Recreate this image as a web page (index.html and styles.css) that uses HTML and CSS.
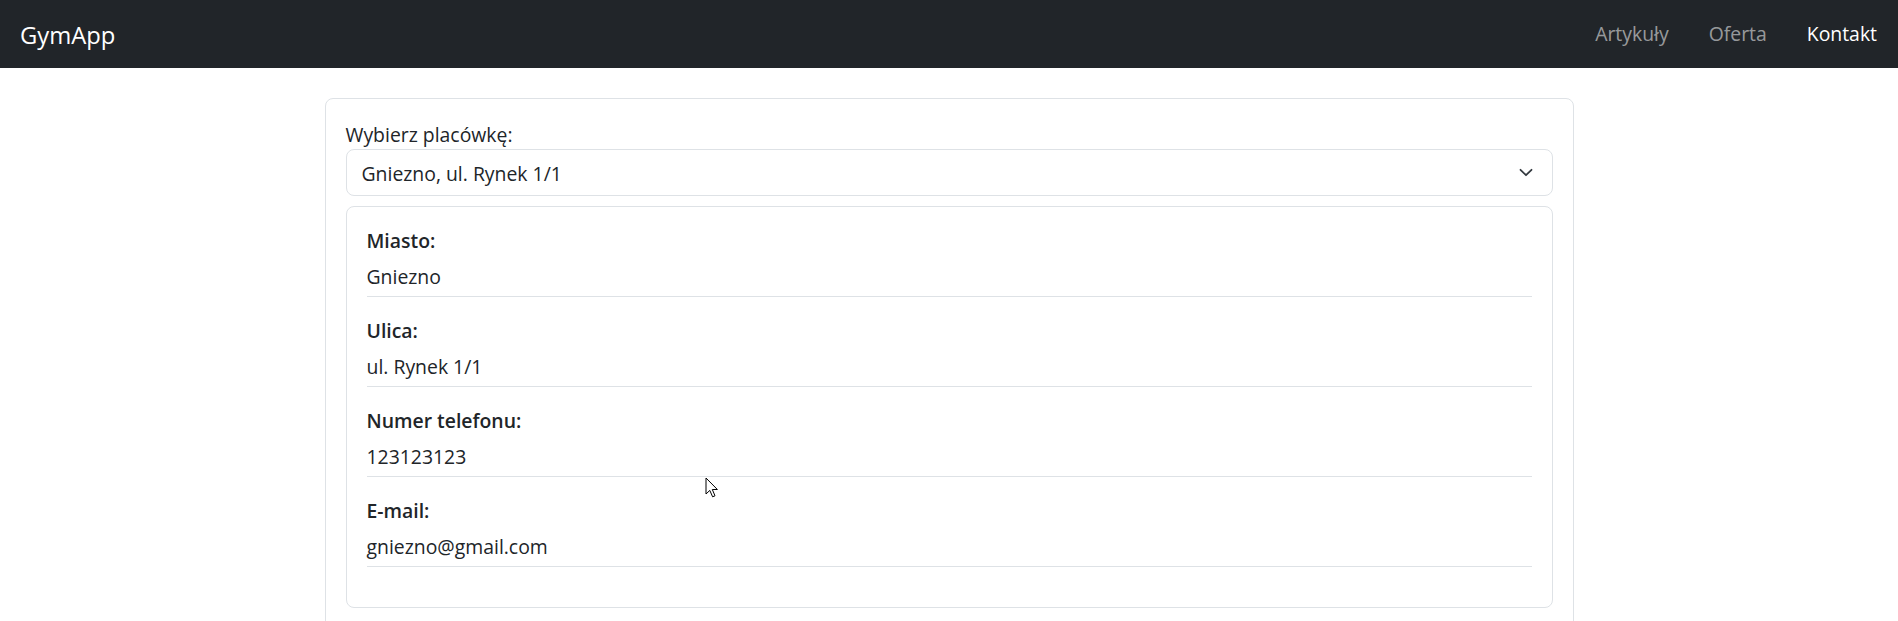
FILE: index.html
```html
<!DOCTYPE html>
<html lang="pl">
<head>
<meta charset="utf-8">
<title>GymApp</title>
<link rel="stylesheet" href="styles.css">
</head>
<body>
<nav class="navbar">
  <a class="brand" href="#">GymApp</a>
  <ul class="nav">
    <li><a class="nav-link" href="#">Artykuły</a></li>
    <li><a class="nav-link" href="#">Oferta</a></li>
    <li><a class="nav-link active" href="#">Kontakt</a></li>
  </ul>
</nav>
<main class="container">
  <div class="card">
    <label class="form-label">Wybierz placówkę:</label>
    <div class="select">
      <span class="select-text">Gniezno, ul. Rynek 1/1</span>
      <svg class="chev" width="14" height="9" viewBox="0 0 14 9"><path d="M1.5 1.8 7 7.2 12.5 1.8" fill="none" stroke="#343a40" stroke-width="1.8" stroke-linecap="round" stroke-linejoin="round"/></svg>
    </div>
    <div class="info">
      <div class="group">
        <div class="label">Miasto:</div>
        <div class="value">Gniezno</div>
      </div>
      <div class="group">
        <div class="label">Ulica:</div>
        <div class="value">ul. Rynek 1/1</div>
      </div>
      <div class="group">
        <div class="label">Numer telefonu:</div>
        <div class="value">123123123</div>
      </div>
      <div class="group">
        <div class="label">E-mail:</div>
        <div class="value">gniezno@gmail.com</div>
      </div>
    </div>
  </div>
</main>
<svg class="cursor" width="14" height="22" viewBox="0 0 14 22"><path d="M1 1 V17 L4.8 13.4 L7.6 19.8 L10 18.8 L7.3 12.5 H12.4 Z" fill="#fff" stroke="#000" stroke-width="1" stroke-linejoin="miter"/></svg>
</body>
</html>
```

FILE: styles.css
```css
* { box-sizing: border-box; }
html, body { margin: 0; padding: 0; }
body {
  font-family: "Open Sans", "Noto Sans", "Liberation Sans", sans-serif;
  font-size: 19.4px;
  line-height: 30px;
  color: #212529;
  background: #fff;
  position: relative;
  min-height: 621px;
}
.navbar {
  height: 68px;
  background: #212529;
  display: flex;
  align-items: center;
  justify-content: space-between;
  padding: 0 0 0 20px;
}
.brand {
  color: #fff;
  font-size: 23.8px;
  line-height: 30px;
  text-decoration: none;
  margin-top: 1px;
}
.nav {
  display: flex;
  list-style: none;
  margin: 0;
  padding: 0 1px 0 0;
}
.nav-link {
  display: block;
  padding: 0 20px;
  color: rgba(255,255,255,0.55);
  text-decoration: none;
  font-size: 19.4px;
  line-height: 30px;
}
.nav-link.active { color: #fff; }
.container {
  width: 1249px;
  margin: 30px auto 0;
}
.card {
  border: 1px solid #dee2e6;
  border-radius: 8px;
  padding: 20px 20px 40px;
}
.form-label {
  display: block;
  line-height: 29px;
  padding-top: 1px;
}
.select {
  height: 47px;
  border: 1px solid #dee2e6;
  border-radius: 8px;
  display: flex;
  align-items: center;
  justify-content: space-between;
  padding: 0 19px 0 15px;
}
.select-text { padding-top: 2px; }
.chev { display: block; }
.info {
  margin-top: 10px;
  border: 1px solid #dee2e6;
  border-radius: 8px;
  padding: 19px 20px 21px;
}
.group { margin-bottom: 19px; }
.label {
  font-weight: 600;
  line-height: 30px;
  margin-bottom: 6px;
}
.value {
  line-height: 30px;
  padding-bottom: 4px;
  border-bottom: 1px solid #dee2e6;
}
.cursor {
  position: absolute;
  left: 705px;
  top: 477px;
}
```
